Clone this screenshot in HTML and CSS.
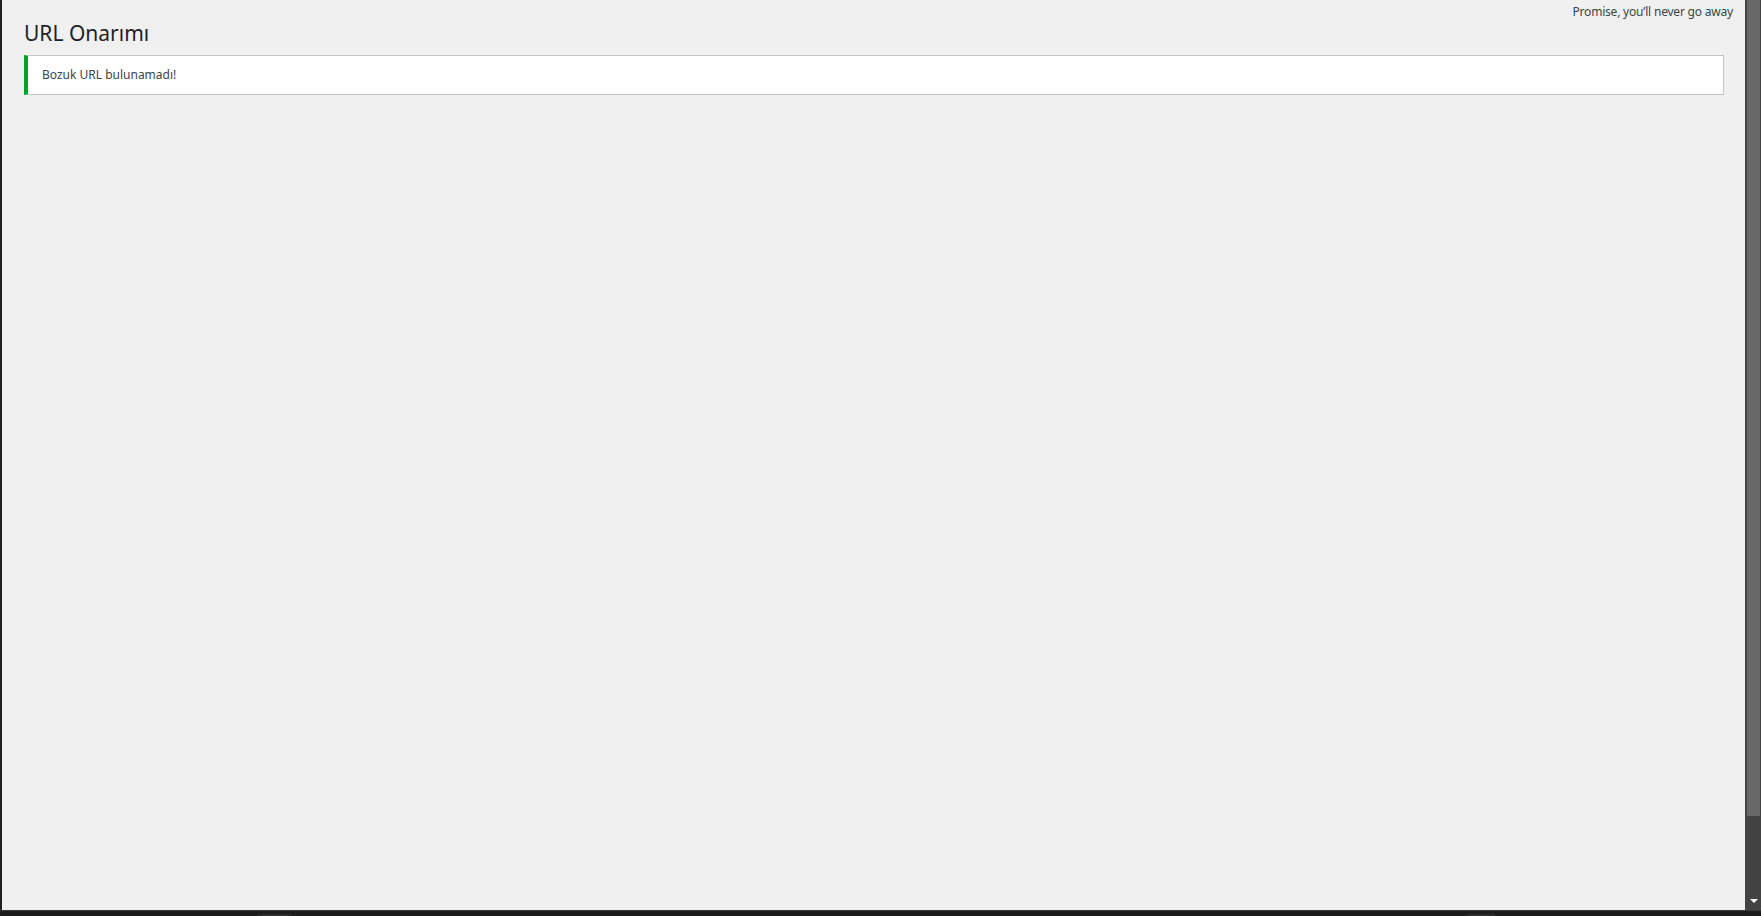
FILE: index.html
```html
<!DOCTYPE html>
<html lang="tr">

<head>
  <meta charset="utf-8">
  <title>URL Onarımı</title>
  <link rel="stylesheet" href="styles.css">
</head>

<body>
  <div class="screen">
    <div class="edge"></div>
    <div class="content">
      <div class="tagline">Promise, you’ll never go away</div>
      <div class="wrap">
        <h1>URL Onarımı</h1>
        <div class="notice notice-success">
          <p>Bozuk URL bulunamadı!</p>
        </div>
      </div>
    </div>
    <div class="scrollbar">
      <div class="scrollbar-thumb"></div>
      <div class="scrollbar-arrow"></div>
    </div>
  </div>
  <div class="taskbar">
    <span class="tab tab-left"></span>
    <span class="tab tab-right"></span>
  </div>
</body>
</html>
```

FILE: styles.css
```css
html,
body {
  margin: 0;
  height: 100%;
  overflow: hidden;
}

body {
  font-family: "Segoe UI", "Noto Sans", sans-serif;
  font-size: 12px;
  line-height: 18px;
  color: #3c434a;
  background: #1c1c1c;
  display: flex;
  flex-direction: column;
}

.screen {
  display: flex;
  height: 910px;
}

.edge {
  width: 2px;
  background: #202124;
}

.content {
  flex: 1;
  background: #f0f0f1;
}

.tagline {
  float: right;
  margin: 3px 12px 0 0;
  letter-spacing: -0.2px;
}

.wrap {
  margin: 10px 21px 0 22px;
}

h1 {
  margin: 0;
  padding: 8px 0 4px;
  font-size: 21px;
  font-weight: 400;
  line-height: 30px;
  color: #1d2327;
}

.notice {
  margin: 3px 0 15px;
  padding: 1px 12px;
  background: #fff;
  border: 1px solid #c3c4c7;
  border-left-width: 4px;
}

.notice-success {
  border-left-color: #00a32a;
}

.notice p {
  margin: 6px 0;
  padding: 2px;
  line-height: 20px;
}

/* fake window scrollbar */
.scrollbar {
  width: 16px;
  background: #434343;
  display: flex;
  flex-direction: column;
  justify-content: space-between;
}

.scrollbar-thumb {
  height: 816px;
  margin: 0 1px 0 2px;
  background: #686868;
}

.scrollbar-arrow {
  align-self: center;
  margin: 0 0 7px 1px;
  width: 0;
  height: 0;
  border-left: 4px solid transparent;
  border-right: 4px solid transparent;
  border-top: 4px solid #fff;
}

.taskbar {
  flex: 1;
  position: relative;
  border-top: 1px solid #3a3a3a;
}

.tab {
  position: absolute;
  top: 3px;
  height: 3px;
  background: #2c2c2c;
  border-radius: 3px 3px 0 0;
}

.tab-left {
  left: 257px;
  width: 35px;
}

.tab-right {
  left: 1466px;
  width: 30px;
}
```
